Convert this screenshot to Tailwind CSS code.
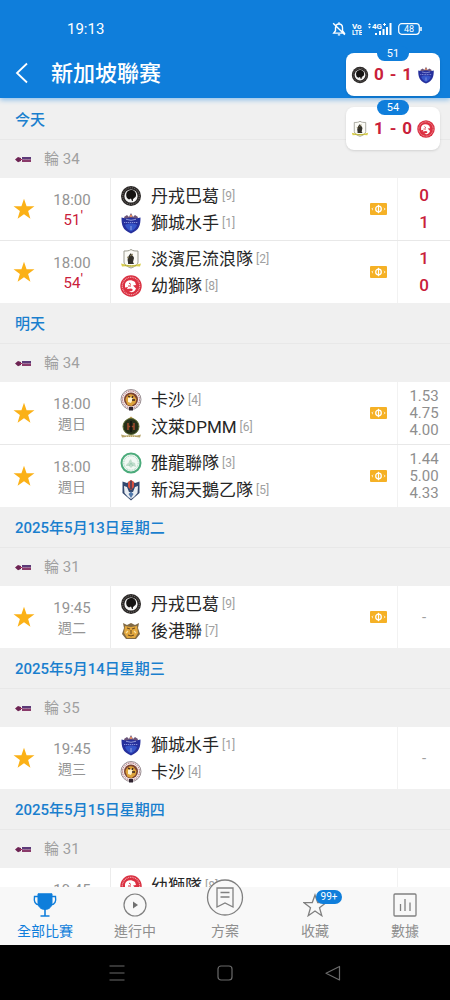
<!DOCTYPE html>
<html lang="zh-Hant">
<head>
  <meta charset="UTF-8" />
  <meta name="viewport" content="width=device-width, initial-scale=1.0"/>
  <title>新加坡聯賽</title>
  <script src="https://cdn.jsdelivr.net/npm/@tailwindcss/browser@4"></script>
</head>
<body class="h-screen flex flex-col overflow-hidden bg-[#f0f0f0] font-['Roboto','Noto_Sans_CJK_TC',sans-serif]">

  <!-- Icon sprites -->
  <svg class="hidden" aria-hidden="true">
    <symbol id="star" viewBox="0 0 24 24">
      <path fill="#fbb117" d="M12 .8l2.800 8.200 8.600.1-6.900 5.200 2.500 8.300L12 17.600 5 22.600l2.500-8.300L.6 9.100l8.600-.1z"/>
    </symbol>
    <symbol id="ticket" viewBox="0 0 17 12">
      <rect width="17" height="12" rx="1" fill="#f5b126"/>
      <circle cx="8.500" cy="6" r="2.800" fill="none" stroke="#fff" stroke-width="1.300"/>
      <path d="M8.500 1.800v8.400" stroke="#fff" stroke-width="1.200"/>
      <path d="M3 4.800L1.800 6 3 7.200M14 4.800L15.200 6 14 7.200" stroke="#fff" fill="none" stroke-width=".8"/>
    </symbol>
    <symbol id="league" viewBox="0 0 17 7">
      <path d="M0 3.500L3 1l3 1v3L3 6.200z" fill="#6d2353"/>
      <path d="M5 3.500h2" stroke="#a03060" stroke-width="1"/>
      <rect x="7" y="1" width="9" height="2.500" fill="#5c3a78"/>
      <rect x="7" y="3.500" width="9" height="2.500" fill="#8a3a6a"/>
      <path d="M8 3.500h7" stroke="#a58bb0" stroke-width=".5" stroke-dasharray="1 .6"/>
    </symbol>

    <!-- Club crests -->
    <symbol id="tanjong" viewBox="0 0 22 22">
      <circle cx="11" cy="11" r="10" fill="#292625"/>
      <circle cx="11" cy="11" r="8.300" fill="none" stroke="#8b8784" stroke-width=".8" stroke-dasharray="1 1"/>
      <circle cx="11" cy="11" r="6.600" fill="#f4f4f4"/>
      <path d="M7 13c-2-4 0-8 4-8 3 0 5.500 2 5 5.500 0 2-2 2-2.500 3l1.500 2-3 .5-1-2.500-2 1z" fill="#151312"/>
      <circle cx="14" cy="15" r="1.200" fill="#fff"/>
    </symbol>
    <symbol id="sailors" viewBox="0 0 22 22">
      <path d="M4 5l3-2 2 2 2-4 2 4 2-2 3 2-1 3H5z" fill="#6b5478"/>
      <circle cx="11" cy="4" r="1.200" fill="#e0885f"/>
      <path d="M1.500 5.500l4.500 1 5-1 5 1 4.500-1c0 7.500-1 12.500-9.500 16-8.500-3.500-9.500-8.500-9.500-16z" fill="#26309c"/>
      <path d="M5 13c3-2 9-2 12 0-1 3-3 5-6 6.500C8 18 6 16 5 13z" fill="#3656c9"/>
      <path d="M4 10.500h14" stroke="#8791da" stroke-width="1.200" stroke-dasharray="1.300 .7"/>
      <path d="M6 7.300l5 1 5-1M11 14v4" stroke="#b9c2f2" stroke-width=".7" fill="none"/>
    </symbol>
    <symbol id="tampines" viewBox="0 0 22 22">
      <path d="M4 3c3 0 5 0 7-1.500C13 3 15 3 18 3v11c0 3-4 5-7 6-3-1-7-3-7-6z" fill="#fbfbf6" stroke="#9b9b8f" stroke-width="1"/>
      <path d="M8 14c-1-3 0-6 3-9 0 2 3 3 3 5l-1 4 1 2H8z" fill="#33312a"/>
      <path d="M10 8l3-2M7 9l2 1" stroke="#887d55" stroke-width="1"/>
      <path d="M1 15.500l4 1c4 1 8 1 12 0l4-1-1 3-4-.3c-3 .8-7 .8-10 0l-4 .3z" fill="#d8cd4c"/>
      <path d="M5 17.200c4 1 8 1 12 0" stroke="#8d8f38" stroke-width=".7" fill="none" stroke-dasharray="1 .7"/>
    </symbol>
    <symbol id="younglions" viewBox="0 0 22 22">
      <circle cx="11" cy="11" r="10.700" fill="#d92f40"/>
      <circle cx="11" cy="11" r="8.700" fill="none" stroke="#f4a6ad" stroke-width="1.200" stroke-dasharray="1 .8"/>
      <circle cx="11" cy="11" r="7" fill="#dd3243"/>
      <path d="M5 9c1-4 6-5 10-2l1 3-3 .5 3 3c-1 3-4 5-7 3l3-.5c1-1 1-2-1-2.500l-4 .5 1-2-3 .5z" fill="#fff"/>
      <path d="M9 8l2 1.500M8 11h3" stroke="#d92f40" stroke-width="1"/>
    </symbol>
    <symbol id="khalsa" viewBox="0 0 22 22">
      <circle cx="11" cy="10.500" r="10" fill="#f0e8e8" stroke="#9a8f93" stroke-width="1"/>
      <circle cx="11" cy="10.500" r="8.500" fill="none" stroke="#b3636d" stroke-width="1" stroke-dasharray="1.300 1"/>
      <circle cx="11" cy="10.500" r="7" fill="#7c4231"/>
      <path d="M5.500 11c0-4 4-7 8-5l3 4-1 4-4 3-4-1z" fill="#dda33b"/>
      <path d="M8 9l4-1 1 2-2 4-3-1z" fill="#fff2cf"/>
      <path d="M12 11h3M8 7l2 1M13 7l-1 2" stroke="#39231c" stroke-width="1.300"/>
      <path d="M9 18h4v3.500H9z" fill="#2f2430"/>
    </symbol>
    <symbol id="dpmm" viewBox="0 0 22 22">
      <path d="M8 3l3-2.500L14 3l-1 2H9z" fill="#b8974c"/>
      <circle cx="11" cy="10.500" r="8" fill="#27301a" stroke="#5d6c32" stroke-width="1"/>
      <path d="M8 7v7M14 7v7M8 10.500h6" stroke="#9d4a2d" stroke-width="1.600"/>
      <path d="M11 5v11" stroke="#111" stroke-width="1.500"/>
      <path d="M1 18.500l4 1 6-.5 6 .5 4-1-1 3-4-.5H6L2 21.500z" fill="#b7a56c"/>
      <path d="M6 20.200h10" stroke="#f5edcd" stroke-width=".8" stroke-dasharray="1 1"/>
    </symbol>
    <symbol id="geylang" viewBox="0 0 22 22">
      <circle cx="11" cy="11" r="9.500" fill="#f2f8f4" stroke="#4bab7b" stroke-width="2"/>
      <circle cx="11" cy="11" r="7.200" fill="none" stroke="#9dd0b5" stroke-width="1" stroke-dasharray="1 .8"/>
      <path d="M6 14c0-3 3-2 3-5l2-2 1 3 3 1 1 4-3-1-2 2-2-2z" fill="#bfdccb"/>
      <path d="M9 14l2-3 2 3" stroke="#95c8ae" stroke-width=".8" fill="none"/>
    </symbol>
    <symbol id="albirex" viewBox="0 0 22 22">
      <path d="M2.500 2.500L7 4l4-3 4 3 4.500-1.500V14L11 21.500 2.500 14z" fill="#33486e"/>
      <path d="M4 7l3 1 2 5h4l2-5 3-1-.5 7-3.500 4-3 2-3-2-3.500-4z" fill="#e9edf2"/>
      <path d="M8 3l3-2 3 2v5l-3 3-3-3z" fill="#d8503f"/>
      <path d="M11 2v8" stroke="#25395f" stroke-width="1.300"/>
      <path d="M8.500 15l2.500-2.500 2.500 2.500-2.500 4z" fill="#5079ac"/>
    </symbol>
    <symbol id="hougang" viewBox="0 0 22 22">
      <path d="M3 3l4 2 4-2 4 2 4-2-1 5 2 6-4 5H6l-4-5 2-6z" fill="#806a46"/>
      <path d="M5 6l6 1 6-1 1 7-3 5H7l-3-5z" fill="#e3a83e"/>
      <path d="M7 8l3 1M15 8l-3 1M11 10v4M8 15l3 1 3-1" stroke="#6b4c22" stroke-width="1.100" fill="none"/>
      <path d="M8 11l-2 2M14 11l2 2" stroke="#fae2a1" stroke-width="1.200"/>
    </symbol>
  </svg>

  <!-- Header -->
  <header class="relative z-10 shrink-0 h-[98px] mb-px bg-[#0f7edb] text-white shadow-[0_2px_5px_#8fc0ea]">
    <div class="h-[46px] pt-3 pl-[67px] pr-7 flex items-center justify-between">
      <span class="text-[15px]">19:13</span>
      <div class="flex items-center gap-1.5">
        <svg class="w-3.5 h-3.5" viewBox="0 0 12 12" fill="none" stroke="#fff" stroke-width="1.200" aria-label="靜音">
          <path d="M1.500 9.500h9L9 7.500V5c0-2-1-3.300-3-3.300S3 3 3 5v2.500zM5 11h2M6 .3v1.500M1 1l10 10"/>
        </svg>
        <svg class="w-[10px] h-3.5 font-bold" viewBox="0 0 10 14" fill="#fff">
          <text x="0" y="6.500" font-size="8">Vo</text>
          <text x="0" y="13" font-size="6.500">LTE</text>
        </svg>
        <svg class="w-6 h-3.5 font-bold" viewBox="0 0 24 14" fill="#fff" font-size="8">
          <path d="M0 3l1.500-2L3 3zM0 4.500h3l-1.500 2z"/>
          <text x="4" y="6.500">4G</text>
          <path d="M15 2h3v1h-3zM16 1h1v3h-1zM7 11h2v2H7zM11 9h2v4h-2zM14.500 7h2v6h-2zM18 5h2v8h-2zM21.500 1h2v12h-2z"/>
        </svg>
        <svg class="w-6 h-3" viewBox="0 0 24 12" fill="none" stroke="#fff">
          <rect x=".7" y=".7" width="20.600" height="10.600" rx="3" stroke-width="1.200"/>
          <path d="M23 4v4" stroke-width="1.500"/>
          <text x="6" y="9" font-size="9" fill="#fff" stroke="none">48</text>
        </svg>
      </div>
    </div>
    <div class="h-[53px] px-3 flex items-center gap-[19px]">
      <button type="button" aria-label="返回" class="w-5 h-6 flex items-center justify-center">
        <svg class="w-5 h-6" viewBox="0 0 20 24" fill="none" stroke="#fff" stroke-width="1.800"><path d="M15 2.500L5 12 15 21.500"/></svg>
      </button>
      <h1 class="pt-0.5 text-[22px] font-medium">新加坡聯赛</h1>
    </div>

    <!-- Floating live scores -->
    <div id="liveScores" class="absolute right-[10px] top-[53px] flex flex-col gap-[11px]"></div>
  </header>

  <!-- Match list -->
  <main id="matchList" class="flex-1 min-h-0 overflow-hidden"></main>

  <!-- Tab bar -->
  <nav class="relative shrink-0 h-[58px] grid grid-cols-5 bg-[#f8f8f8] text-sm text-[#8e8e8e]">
    <a href="#all" class="flex flex-col items-center gap-1 pt-1.5 text-[#0f7edb]">
      <svg class="w-6 h-6" viewBox="0 0 24 24" fill="none" stroke="#0f7edb">
        <path d="M5 .8h14v9c0 4-3 6.700-7 6.700s-7-2.700-7-6.700z" fill="#0f7edb"/>
        <path d="M5 3.500H1.500c-.8 5 .5 8 4.500 8.500M19 3.500h3.500c.8 5-.5 8-4.500 8.500" stroke-width="1.400"/>
        <path d="M12 16v6.500M7.500 23h9" stroke-width="1.600"/>
      </svg>
      <span>全部比賽</span>
    </a>
    <a href="#live" class="flex flex-col items-center gap-1 pt-1.5">
      <svg class="w-6 h-6" viewBox="0 0 24 24" fill="none" stroke="#808080" stroke-width="1.200">
        <circle cx="12" cy="12" r="11"/>
        <path d="M10 8.500v7l5-3.500z" fill="#707070" stroke="none"/>
      </svg>
      <span>進行中</span>
    </a>
    <a href="#plan" class="flex flex-col items-center gap-1 -mt-2">
      <svg class="w-[38px] h-[38px]" viewBox="0 0 38 38" fill="none" stroke="#808080" stroke-width="1.300">
        <circle cx="19" cy="18.500" r="17.500" fill="#f8f8f8"/>
        <path d="M11 9h16v19l-8-4-8 4zM14.500 13.500h9M14.500 18h9"/>
      </svg>
      <span>方案</span>
    </a>
    <a href="#favourites" class="relative flex flex-col items-center gap-1 pt-1.5">
      <svg class="w-6 h-6" viewBox="0 0 24 24" fill="none" stroke="#808080" stroke-width="1.300">
        <path d="M12 2l2.700 7.500 8.300.2-6.500 5 2.300 8L12 18l-6.800 4.700 2.300-8L1 9.700l8.300-.2z"/>
      </svg>
      <span>收藏</span>
      <span class="absolute left-[46px] top-[3px] w-[26px] h-[14px] rounded-full bg-[#0f7edb] text-white text-[10px] leading-[14px] text-center">99+</span>
    </a>
    <a href="#data" class="flex flex-col items-center gap-1 pt-1.5">
      <svg class="w-6 h-6" viewBox="0 0 24 24" fill="none" stroke="#808080" stroke-width="1.300">
        <rect x="1" y="1" width="22" height="22" rx="1"/>
        <path d="M7.500 11v7M12 6v12M17 9.500V18"/>
      </svg>
      <span>數據</span>
    </a>
  </nav>

  <!-- Android keys -->
  <div class="shrink-0 h-[55px] bg-black flex items-center justify-center gap-[90px]">
    <button type="button" aria-label="最近" class="w-[18px]">
      <svg class="w-[18px] h-[18px]" viewBox="0 0 18 18" stroke="#6a6a6a" stroke-width="1.200"><path d="M1.500 2h15M1.500 9h15M1.500 16h15"/></svg>
    </button>
    <button type="button" aria-label="主畫面" class="w-[18px]">
      <svg class="w-[18px] h-[18px]" viewBox="0 0 18 18" fill="none" stroke="#6a6a6a" stroke-width="1.200"><rect x="2" y="2" width="14" height="14" rx="3"/></svg>
    </button>
    <button type="button" aria-label="返回鍵" class="w-[18px]">
      <svg class="w-[18px] h-[18px]" viewBox="0 0 18 18" fill="none" stroke="#6a6a6a" stroke-width="1.200"><path d="M15.500 2.500v13.500L2 9.300z" stroke-linejoin="round"/></svg>
    </button>
  </div>

  <script>
    const teams = {
      tanjong: ["丹戎巴葛", 9],
      sailors: ["獅城水手", 1],
      tampines: ["淡濱尼流浪隊", 2],
      younglions: ["幼獅隊", 8],
      khalsa: ["卡沙", 4],
      dpmm: ["汶萊DPMM", 6],
      geylang: ["雅龍聯隊", 3],
      albirex: ["新潟天鵝乙隊", 5],
      hougang: ["後港聯", 7],
    };

    const days = [
      { day: "今天", round: 34, matches: [
        { time: "18:00", minute: 51, home: "tanjong", away: "sailors", ticket: true, score: [0, 1] },
        { time: "18:00", minute: 54, home: "tampines", away: "younglions", ticket: true, score: [1, 0] },
      ]},
      { day: "明天", round: 34, matches: [
        { time: "18:00", week: "週日", home: "khalsa", away: "dpmm", ticket: true, odds: ["1.53", "4.75", "4.00"] },
        { time: "18:00", week: "週日", home: "geylang", away: "albirex", ticket: true, odds: ["1.44", "5.00", "4.33"] },
      ]},
      { day: "2025年5月13日星期二", round: 31, matches: [
        { time: "19:45", week: "週二", home: "tanjong", away: "hougang", ticket: true },
      ]},
      { day: "2025年5月14日星期三", round: 35, matches: [
        { time: "19:45", week: "週三", home: "sailors", away: "khalsa" },
      ]},
      { day: "2025年5月15日星期四", round: 31, matches: [
        { time: "19:45", home: "younglions" },
      ]},
    ];

    const teamRow = (id) => id ? `
      <div class="h-[27px] flex items-center">
        <svg class="w-[22px] h-[22px] mr-[9px] shrink-0"><use href="#${id}"/></svg>
        <span class="pt-0.5 text-[17px] leading-[27px] text-[#262626]">${teams[id][0]}</span>
        <span class="ml-[3px] text-xs text-[#a0a0a0]">[${teams[id][1]}]</span>
      </div>` : `<div class="h-[27px]"></div>`;

    const result = (m) => {
      if (m.score) return m.score.map(s => `<span class="text-[17px] leading-[27px] font-medium text-[#c9203a]">${s}</span>`).join("");
      if (m.odds) return m.odds.map(o => `<span class="text-[15px] leading-[17px] text-[#8e8e8e]">${o}</span>`).join("");
      return m.away ? `<span class="text-[15px] text-[#a0a0a0]">-</span>` : "";
    };

    const matchRow = (m) => `
      <li class="min-h-[62px] box-content grid grid-cols-[48px_62px_1fr_38px_53px] items-stretch bg-white">
        <button type="button" aria-label="收藏" aria-pressed="true" class="flex items-center justify-center">
          ${m.away ? `<svg class="w-[22px] h-[22px]"><use href="#star"/></svg>` : ""}
        </button>
        <div class="pt-0.5 pr-[14px] flex flex-col items-center justify-center text-[15px] leading-5 text-[#949494]">
          <span>${m.time}</span>
          ${m.minute
            ? `<span class="relative text-[#c9203a]">${m.minute}<span class="absolute left-full -top-1">'</span></span>`
            : `<span class="h-5 text-sm leading-5">${m.week || ""}</span>`}
        </div>
        <div class="min-w-0 pl-[9px] flex flex-col justify-center border-l border-[#ececec]">
          ${teamRow(m.home)}
          ${teamRow(m.away)}
        </div>
        <div class="flex items-center justify-center">
          ${m.ticket ? `<svg class="w-[17px] h-3"><use href="#ticket"/></svg>` : ""}
        </div>
        <div class="flex flex-col items-center justify-center border-l border-[#f2f2f2]">${result(m)}</div>
      </li>`;

    document.getElementById("matchList").innerHTML = days.map(d => `
      <section>
        <h2 class="h-[41px] px-[15px] pt-0.5 flex items-center border-b border-[#e8e8e8] text-[15px] font-medium text-[#1a7fce]">${d.day}</h2>
        <div class="h-[38px] px-[15px] flex items-center gap-3 text-[15px] text-[#a0a0a0]">
          <svg class="w-[17px] h-[7px]"><use href="#league"/></svg>
          <span>輪 ${d.round}</span>
        </div>
        <ul class="divide-y divide-[#e8e8e8]">${d.matches.map(matchRow).join("")}</ul>
      </section>`).join("");

    document.getElementById("liveScores").innerHTML = days[0].matches.map(m => `
      <div class="relative w-[94px] h-[43px] px-[5px] flex items-center justify-between rounded-lg bg-white shadow">
        <span class="absolute left-[31px] -top-[7px] w-8 h-[15px] rounded-full bg-[#0f7edb] text-[11px] leading-[15px] text-center text-white">${m.minute}</span>
        <svg class="w-[18px] h-[18px]"><use href="#${m.home}"/></svg>
        <span class="flex gap-1.5 text-[17px] font-bold text-[#c9203a]"><span>${m.score[0]}</span><span>-</span><span>${m.score[1]}</span></span>
        <svg class="w-[18px] h-[18px]"><use href="#${m.away}"/></svg>
      </div>`).join("");
  </script>
</body>
</html>
